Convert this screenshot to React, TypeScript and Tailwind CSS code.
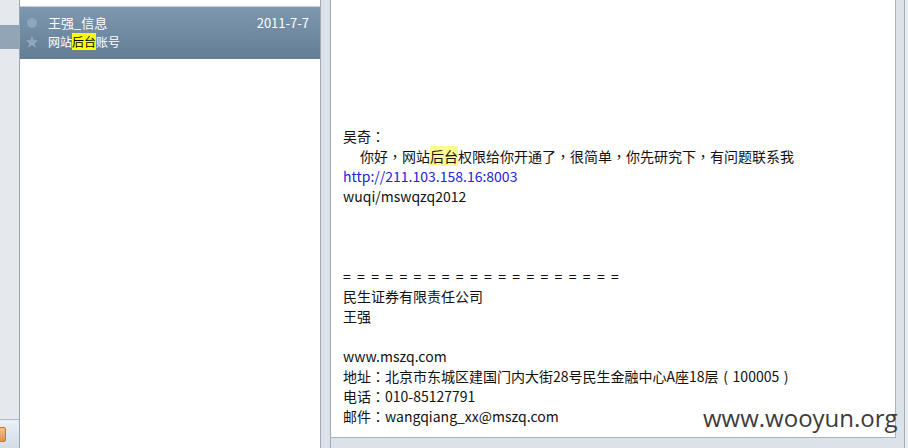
import React from "react";

const cjk = { fontFamily: '"Noto Sans CJK SC", "Noto Sans", sans-serif' };
const tc = { fontFamily: '"Noto Sans CJK TC", sans-serif' };

function P({ c }: { c: string }) {
  return <span style={tc}>{c}</span>;
}

function Paren({ c }: { c: string }) {
  return <span className="inline-block w-[14px] text-center">{c}</span>;
}

function Star() {
  return (
    <svg width="14" height="14" viewBox="0 0 24 24">
      <path
        d="M12 1.5l3.1 7.1 7.6.6-5.8 5 1.8 7.5L12 17.7l-6.7 4 1.8-7.5-5.8-5 7.6-.6z"
        fill="#8ea5ba"
      />
    </svg>
  );
}

export default function App() {
  return (
    <div
      className="relative flex h-[448px] w-[908px] overflow-hidden bg-[#dbe3ea]"
      style={cjk}
    >
      {/* left nav strip */}
      <div className="flex h-full w-[20px] flex-col border-r border-[#9aa6b1] bg-[#e5e9ed]">
        <div className="h-[25px]" />
        <div className="h-[24px] bg-[#91a5b7]" />
        <div className="flex-1" />
        <div className="relative h-[29px] border-t border-[#a9b8c5] bg-gradient-to-b from-[#eaf1f6] to-[#d3dde6]">
          <div className="absolute left-[-6px] top-[7px] h-[15px] w-[12px] rounded-[2px] border border-[#c27733] bg-gradient-to-b from-[#f6c08a] to-[#e38f45]" />
        </div>
      </div>

      {/* message list */}
      <div className="flex h-full w-[300px] flex-col bg-white">
        <div className="h-[6px]" />
        <div className="h-[53px] border-t border-[#c5ccd3] bg-gradient-to-b from-[#7d97ae] to-[#647d94] pt-[6px]">
          <div className="flex h-[19px] items-center">
            <div className="flex w-[23px] justify-center pl-[1px]">
              <div className="h-[10px] w-[10px] rounded-full bg-[#8ea5ba]" />
            </div>
            <div className="w-[5px]" />
            <div className="flex-1 text-[13px] leading-[19px] text-white">王强_信息</div>
            <div className="pr-[11px] text-[13px] leading-[19px] text-white">2011-7-7</div>
          </div>
          <div className="flex h-[19px] items-center">
            <div className="flex w-[23px] justify-center pl-[1px]">
              <Star />
            </div>
            <div className="w-[5px]" />
            <div className="text-[12px] leading-[18px] text-white">
              网站<span className="bg-[#ffff00] text-black">后台</span>账号
            </div>
          </div>
        </div>
      </div>

      {/* splitter */}
      <div className="h-full w-[11px] border-x border-[#a4adb6] bg-[#dbe3ea]" />

      {/* reading pane */}
      <div className="h-[438px] w-[565px] border-b border-r border-[#a9b3bc] bg-white pl-[12px] pt-[126px] text-[14px] leading-[20px] text-[#111]">
        <div>
          吴奇<P c="：" />
        </div>
        <div>
          <span className="inline-block w-[17px]" />
          你好<P c="，" />网站<span className="bg-[#fdfb8e]">后台</span>权限给你开通了<P c="，" />很简单<P c="，" />你先研究下<P c="，" />有问题联系我
        </div>
        <div className="text-[#2424d6]">http://211.103.158.16:8003</div>
        <div>wuqi/mswqzq2012</div>
        <div className="h-[20px]" />
        <div className="h-[20px]" />
        <div className="h-[20px]" />
        <div className="tracking-[1.6px]">= = = = = = = = = = = = = = = = = = = =</div>
        <div>民生证券有限责任公司</div>
        <div>王强</div>
        <div className="h-[20px]" />
        <div>www.mszq.com</div>
        <div>
          地址<P c="：" />北京市东城区建国门内大街28号民生金融中心A座18层<Paren c="(" />100005<Paren c=")" />
        </div>
        <div>
          电话<P c="：" />010-85127791
        </div>
        <div>
          邮件<P c="：" />wangqiang_xx@mszq.com
        </div>
      </div>

      {/* right strip */}
      <div className="h-full w-[8px] bg-[#dbe3ea]" />
      <div className="h-full w-[4px] border-l border-[#a4adb6] bg-[#e8edf1]" />

      {/* watermark */}
      <div
        className="absolute left-[703px] top-[402px] text-[24px] leading-[32px] text-[#3c3c3c]"
        style={{ fontFamily: '"Open Sans", sans-serif' }}
      >
        www.wooyun.org
      </div>
    </div>
  );
}
